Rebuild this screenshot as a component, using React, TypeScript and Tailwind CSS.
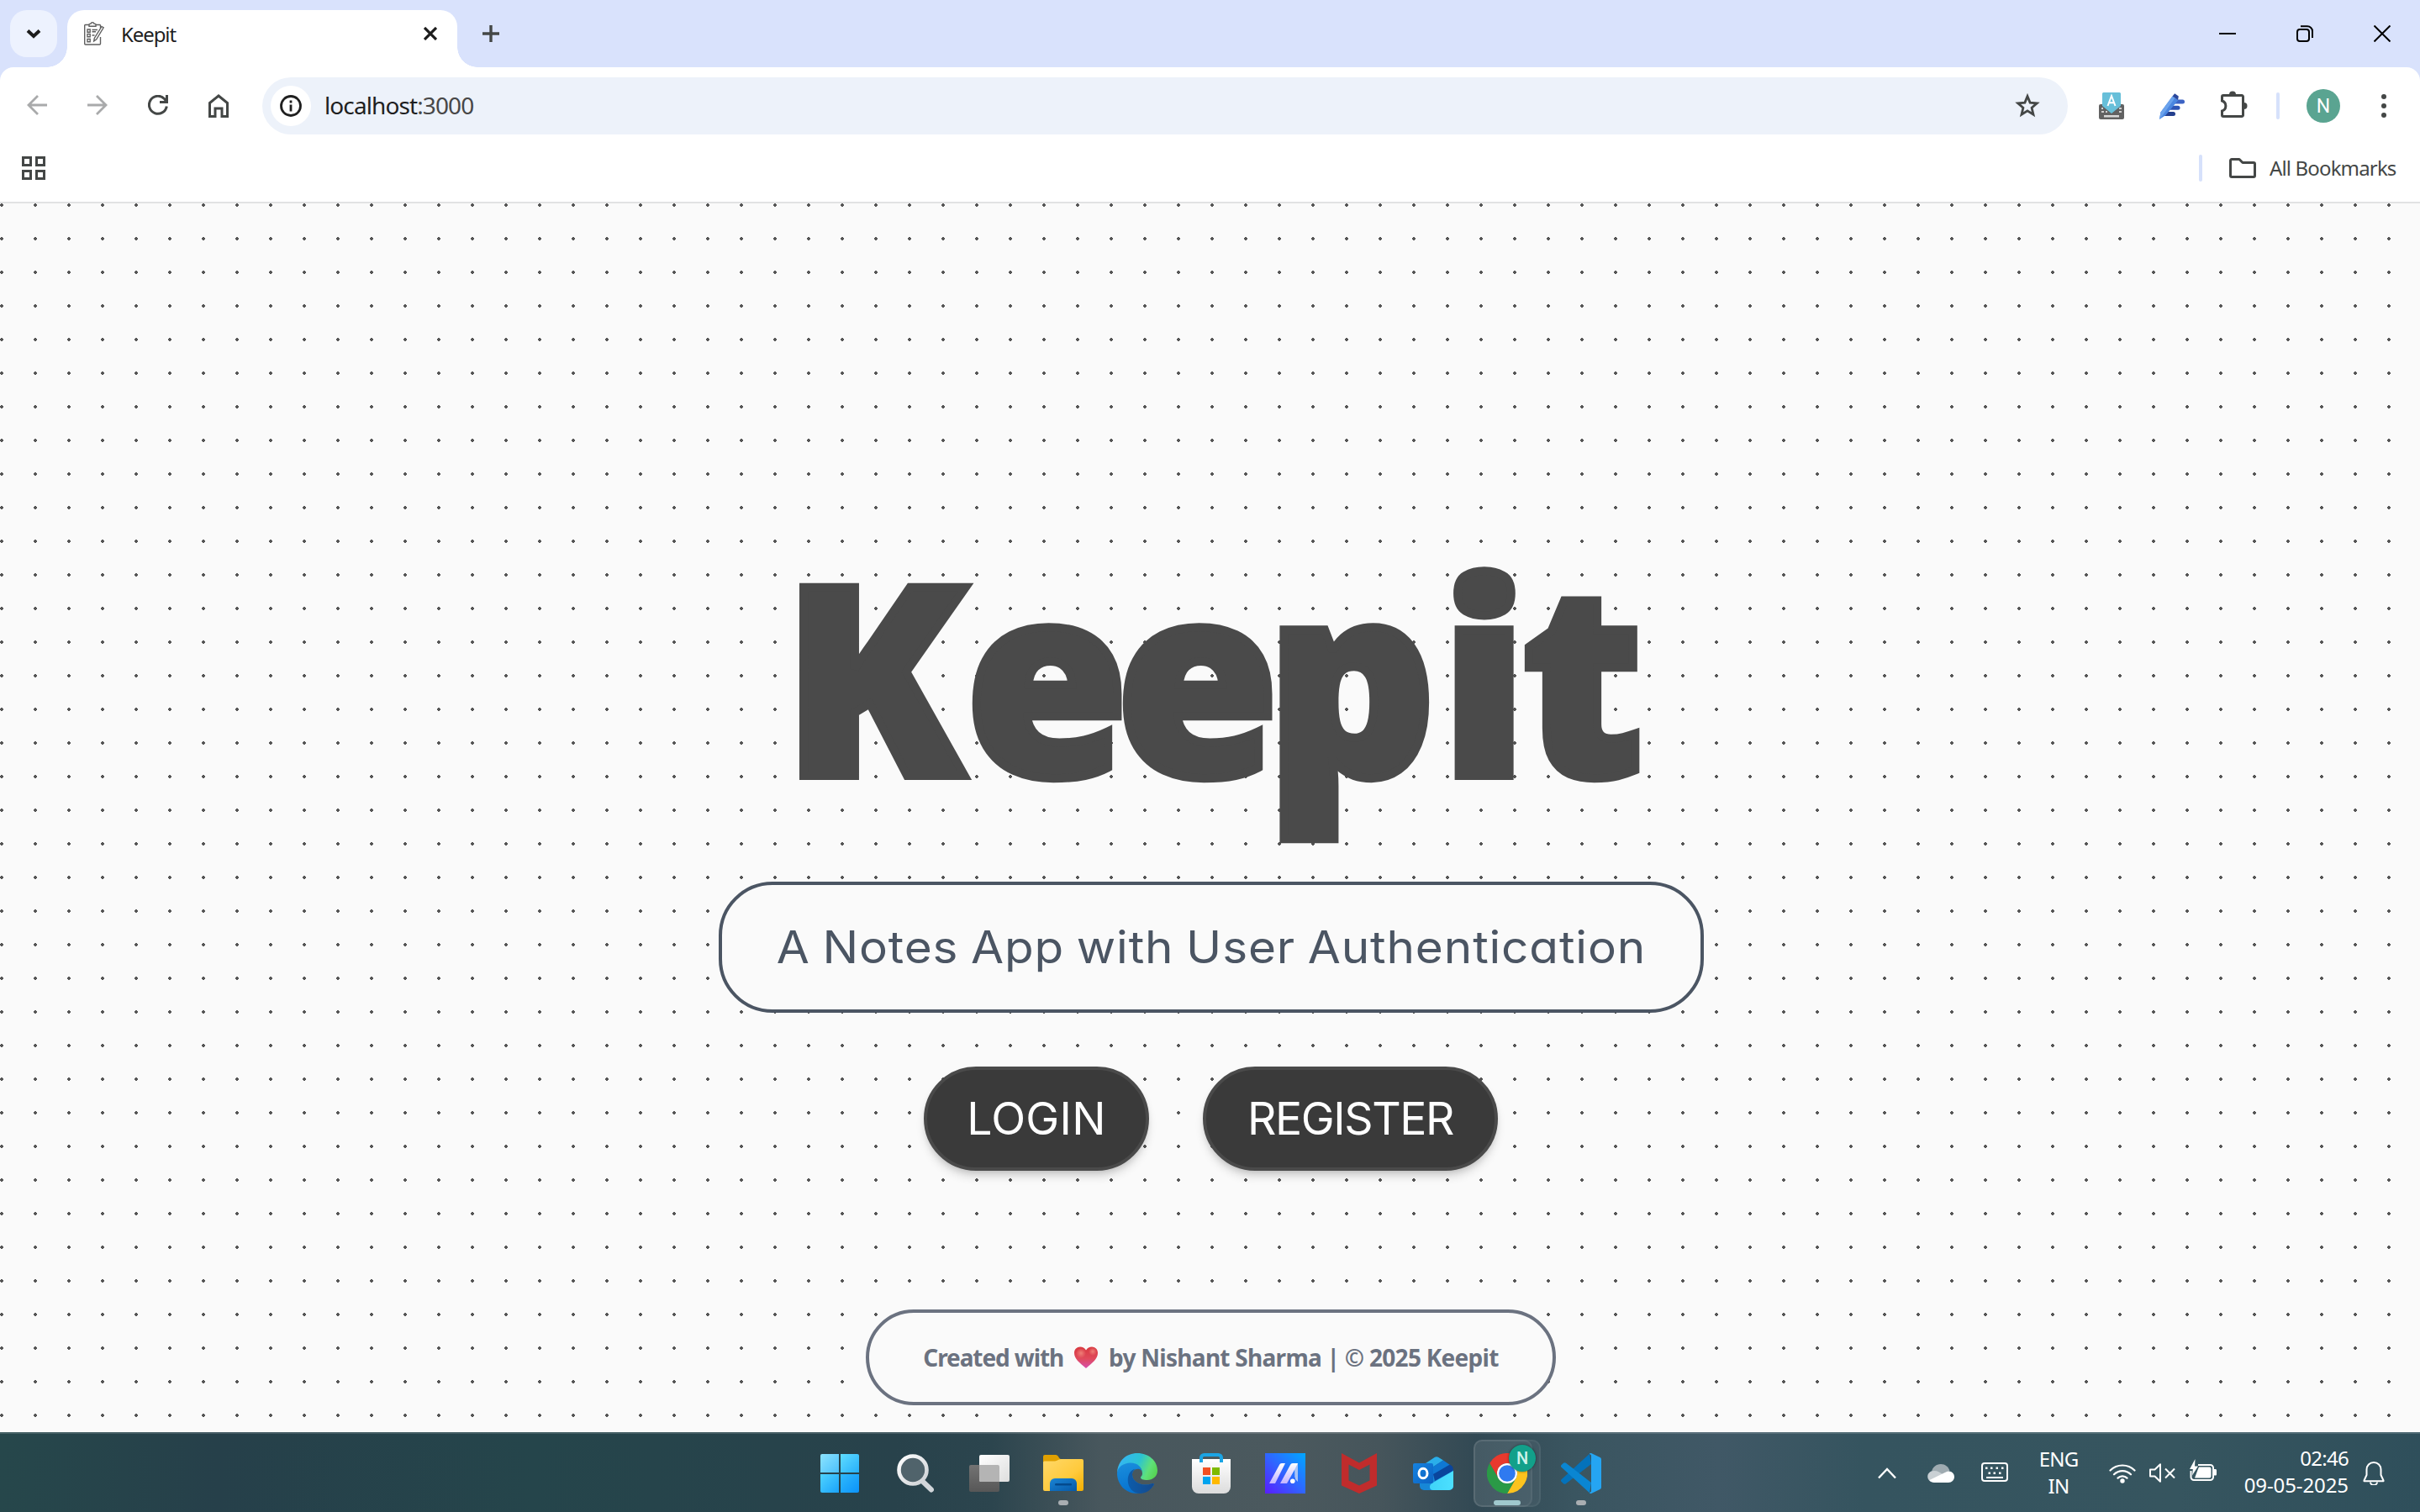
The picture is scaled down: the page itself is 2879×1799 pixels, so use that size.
import React from "react";

const ui = "font-['Noto_Sans','Open_Sans',sans-serif]";
const geo = "font-[Inter,sans-serif] [font-feature-settings:'cv11']";

/* ---------- browser chrome ---------- */

function Favicon() {
  return (
    <svg width="24" height="28" viewBox="0 0 24 28" fill="none" stroke="#5f5f5f" strokeWidth="1.4">
      <path d="M6 3.5H1.5a.8.8 0 0 0-.8.8v21.8c0 .6.3.9.9.9h17c.6 0 .9-.3.9-.9V18M14 3.5h4.500a1 1 0 0 1 1 1V7" />
      <path d="M6 5.300V3.200c0-.5.300-.8.800-.8h1C8.300 1 9 .8 10 .8s1.700.2 2.200 1.600h1c.5 0 .8.300.8.800v2.100z" />
      <path d="M4 9h3.200v3.200H4zM4 14.500h3.200v3.200H4zM4 20.500h3.200v3.200H4zM9.500 9.500H16M9.500 11.800H14M9.500 16h3" />
      <path d="m21 5.500 2.200 1.300-8.500 14-3 2.200.6-3.600z" />
    </svg>
  );
}

function TabStrip() {
  return (
    <div className="flex h-20 items-start pl-3 pr-[35px]">
      <div className="mt-3 flex size-14 items-center justify-center rounded-[20px] bg-[#edf2fe]">
        <svg width="18" height="12" viewBox="0 0 18 12" fill="none" stroke="#1c1c1c" strokeWidth="4">
          <path d="m2 2.500 7 6.500 7-6.500" />
        </svg>
      </div>
      <div className="relative ml-3 mt-3 flex h-[68px] w-[464px] items-center rounded-t-[20px] bg-white pb-3 pl-5 pr-6">
        <div className="absolute -left-6 bottom-0 size-6 bg-[radial-gradient(circle_at_0_0,transparent_23.500px,white_24px)]" />
        <div className="absolute -right-6 bottom-0 size-6 bg-[radial-gradient(circle_at_100%_0,transparent_23.500px,white_24px)]" />
        <Favicon />
        <span className="ml-5 mt-px text-[24px] leading-8 tracking-[-1.1px] text-[#1f1f1f]">Keepit</span>
        <svg className="ml-auto" width="16" height="16" viewBox="0 0 16 16" stroke="#1c1c1c" strokeWidth="3.200">
          <path d="m1 1 14 14M15 1 1 15" />
        </svg>
      </div>
      <svg className="ml-[30px] mt-[30px]" width="20" height="20" viewBox="0 0 20 20" stroke="#444746" strokeWidth="3.400">
        <path d="M10 0v20M0 10h20" />
      </svg>
      <div className="ml-auto mt-[30px] flex gap-[72px]">
        <svg width="20" height="20" viewBox="0 0 20 20" stroke="#000" strokeWidth="2">
          <path d="M0 10h20" />
        </svg>
        <svg width="20" height="20" viewBox="0 0 20 20" fill="none" stroke="#000" strokeWidth="2">
          <rect x="1" y="5" width="14" height="14" rx="3" />
          <path d="M5 1.200h8a6 6 0 0 1 6 6V15" />
        </svg>
        <svg width="20" height="20" viewBox="0 0 20 20" stroke="#000" strokeWidth="2">
          <path d="m.5.500 19 19m0-19-19 19" />
        </svg>
      </div>
    </div>
  );
}

function KeyboardExt() {
  return (
    <svg width="30" height="32" viewBox="0 0 30 32">
      <rect y="14" width="30" height="18" rx="2" fill="#626262" />
      <path d="M3 18h2v2H3zM3 22h3v2H3zM24 18h3v2h-3zM24 22h3v2h-3zM8 22h2v2H8z" fill="#cfcfcf" />
      <path d="M6 27h18v2.500H6z" fill="#d8d8d8" />
      <path d="M4 1.500A1.500 1.500 0 0 1 5.500 0h19A1.500 1.500 0 0 1 26 1.500V16l-11 9L4 16z" fill="#67bfd9" />
      <path d="m10.500 16 4.500-12 4.500 12M12 12.200h6" fill="none" stroke="#fff" strokeWidth="2" />
    </svg>
  );
}

function PenExt() {
  return (
    <svg width="31" height="31" viewBox="0 0 31 31">
      <path d="M20 7.500h8.500a2.500 2.500 0 0 1 0 5H17z" fill="#3c63c4" />
      <path d="M16 14.700h7a2.500 2.500 0 0 1 0 5H12z" fill="#2f55b5" />
      <path d="M11 22h6.500a2.500 2.500 0 0 1 0 5H6z" fill="#243f8e" />
      <path d="m16.500 3.500 7 4.500L8.500 26 1 31l1.500-8.500z" fill="#4a86e0" />
      <path d="m16.500 3.500 3 1.900L4 27.500 1 31l1.500-8.500z" fill="#6aa2ec" />
      <path d="m19.200.300 4.600 3.200-.8 4.500-6.500-4.500z" fill="#2a479c" />
    </svg>
  );
}

function Toolbar() {
  return (
    <div className="flex h-[92px] items-center pl-8 pr-[38px]">
      <div className="flex w-60 shrink-0 justify-between">
        <svg width="24" height="24" viewBox="0 0 24 24" fill="none" stroke="#a9aaab" strokeWidth="2.800">
          <path d="M24 12H2M13 1 2 12l11 11" />
        </svg>
        <svg width="24" height="24" viewBox="0 0 24 24" fill="none" stroke="#a9aaab" strokeWidth="2.800">
          <path d="M0 12h22M11 1l11 11-11 11" />
        </svg>
        <svg width="24" height="24" viewBox="0 0 24 24" fill="none" stroke="#444746" strokeWidth="3">
          <path d="M22.300 13.500A10.500 10.500 0 1 1 19.500 4.500L22 8" />
          <path d="M22.500 0v8.500H14" />
        </svg>
        <svg className="-mt-px" width="24" height="28" viewBox="0 0 24 28" fill="none" stroke="#444746" strokeWidth="3">
          <path d="M1.500 26.500V10.500L12 2l10.500 8.500v16h-6.500v-9.500H8v9.500z" />
        </svg>
      </div>
      <div className="ml-10 flex h-[68px] w-[2148px] shrink-0 items-center rounded-full bg-[#edf2fa] pl-2.5 pr-[33px]">
        <div className="flex size-12 items-center justify-center rounded-full bg-white">
          <svg width="26" height="26" viewBox="0 0 26 26" fill="none" stroke="#1f1f1f" strokeWidth="2.800">
            <circle cx="13" cy="13" r="11.500" />
            <path d="M13 11.500v8M13 6.500v3" />
          </svg>
        </div>
        <span className="-mt-0.5 ml-4 text-[28px] leading-9 tracking-[-0.9px] text-[#1f1f1f]">
          localhost<span className="text-[#474747]">:3000</span>
        </span>
        <svg className="-mt-px ml-auto" width="30" height="29" viewBox="0 0 30 29" fill="none" stroke="#444746" strokeWidth="2.800">
          <path d="m15 3.500 3.100 7.600 8.200.7-6.200 5.400 1.900 8-7-4.300-7 4.300 1.900-8-6.200-5.400 8.200-.7z" />
        </svg>
      </div>
      <div className="ml-[37px]">
        <KeyboardExt />
      </div>
      <div className="ml-[41px]">
        <PenExt />
      </div>
      <svg className="-mt-1 ml-[43px]" width="32" height="32" viewBox="0 0 32 32">
        <path
          d="M1.500 7a1.500 1.500 0 0 1 1.500-1.500h22A1.500 1.500 0 0 1 26.500 7v22a1.500 1.500 0 0 1-1.500 1.500H3A1.500 1.500 0 0 1 1.500 29v-5a6.300 6.300 0 0 0 0-12z"
          fill="none"
          stroke="#444746"
          strokeWidth="3"
        />
        <path d="M10 4.500a4 4 0 0 1 8 0zM27.500 14a4 4 0 0 1 0 8z" fill="#444746" />
      </svg>
      <div className="ml-[34px] h-8 w-1 rounded-full bg-[#d6e1fb]" />
      <div className="ml-8 flex size-10 items-center justify-center rounded-full bg-[#5aa491] font-[Roboto,sans-serif] text-[23px] leading-none text-white">
        N
      </div>
      <div className="ml-[49px] flex flex-col gap-[5px]">
        <i className="size-1.5 rounded-full bg-[#444746]" />
        <i className="size-1.5 rounded-full bg-[#444746]" />
        <i className="size-1.5 rounded-full bg-[#444746]" />
      </div>
    </div>
  );
}

function BookmarksBar() {
  return (
    <div className="flex h-[70px] items-center border-b-2 border-[#e1e2e3] pb-3 pl-[26px] pr-[28px]">
      <svg width="28" height="28" viewBox="0 0 28 28" fill="none" stroke="#444746" strokeWidth="3">
        <path d="M1.500 1.500h9v9h-9zM17.500 1.500h9v9h-9zM1.500 17.500h9v9h-9zM17.500 17.500h9v9h-9z" />
      </svg>
      <div className="ml-auto h-8 w-1 rounded-full bg-[#d6e1fb]" />
      <svg className="ml-8" width="32" height="24" viewBox="0 0 32 24" fill="none" stroke="#444746" strokeWidth="3" strokeLinejoin="round">
        <path d="M1.500 3A1.500 1.500 0 0 1 3 1.500h9l4 4h13A1.500 1.500 0 0 1 30.500 7v14a1.500 1.500 0 0 1-1.500 1.500H3A1.500 1.500 0 0 1 1.500 21z" />
      </svg>
      <span className="-mt-px ml-4 w-[151px] whitespace-nowrap text-[24px] leading-8 tracking-[-0.85px] text-[#444746]">All Bookmarks</span>
    </div>
  );
}

/* ---------- page ---------- */

function Heart() {
  return (
    <svg width="28" height="26" viewBox="0 0 28 26">
      <defs>
        <linearGradient id="heart" x1="0" y1="0" x2="0" y2="1">
          <stop offset="0" stopColor="#d8383f" />
          <stop offset=".55" stopColor="#e04a5c" />
          <stop offset="1" stopColor="#d64fae" />
        </linearGradient>
        <radialGradient id="shine">
          <stop offset="0" stopColor="#ef8078" />
          <stop offset="1" stopColor="#ef8078" stopOpacity="0" />
        </radialGradient>
      </defs>
      <path d="M14 26C6 19.500 0 14.500 0 7.800 0 3.400 3.200.500 7 .500c3 0 5.500 1.500 7 4 1.500-2.500 4-4 7-4 3.800 0 7 2.900 7 7.300C28 14.500 22 19.500 14 26z" fill="url(#heart)" />
      <circle cx="8" cy="8" r="6" fill="url(#shine)" />
      <circle cx="22" cy="6" r="5" fill="url(#shine)" />
    </svg>
  );
}

function PillButton({ label, className }: { label: string; className: string }) {
  return (
    <button
      className={`flex h-[124px] items-center justify-center rounded-full border-4 border-[#4a4a4a] bg-[#3a3a3a] text-[53.500px] leading-none text-white shadow-[0_8px_12px_-2px_rgba(0,0,0,0.16),0_4px_8px_-4px_rgba(0,0,0,0.16)] ${geo} ${className}`}
    >
      {label}
    </button>
  );
}

function Landing() {
  return (
    <main className="flex h-[1462px] flex-col items-center bg-[#fafafa] bg-[radial-gradient(circle_at_2px_2px,#555_2px,transparent_2px)] bg-[size:40px_40px] pl-0.5 pt-[402px]">
      <h1 className="whitespace-nowrap text-[314px] font-black leading-none text-[#4a4a4a] [-webkit-text-stroke:10px_#4a4a4a]">
        <span className="tracking-[1px]">K</span>
        <span className="tracking-[-15px]">ee</span>
        <span className="tracking-[6px]">p</span>
        <span className="tracking-[-6px]">it</span>
      </h1>
      <div className="mt-[91px] flex h-[156px] w-[1172px] items-center justify-center rounded-[64px] border-4 border-[#4b5563] bg-[#fafafa]">
        <p className={`origin-center scale-x-[1.060] whitespace-nowrap text-[53.500px] leading-none tracking-[0.8px] text-[#4b5563] [word-spacing:-2px] ${geo}`}>
          A Notes App with User Authentication
        </p>
      </div>
      <div className="mt-16 flex gap-16">
        <PillButton label="LOGIN" className="w-[268px] tracking-[0.300px]" />
        <PillButton label="REGISTER" className="w-[351px] tracking-[-1.400px]" />
      </div>
      <footer className="mt-[165px] flex h-[114px] w-[821px] items-center justify-center gap-[13px] rounded-full border-4 border-[#6b7280] bg-[#fafafa] text-[28px] font-bold leading-none text-[#6b7280]">
        <span className="tracking-[-1.100px]">Created with</span>
        <Heart />
        <span className="tracking-[-0.720px]">by Nishant Sharma | © 2025 Keepit</span>
      </footer>
    </main>
  );
}

/* ---------- taskbar ---------- */

function StartIcon() {
  return (
    <svg className="-ml-1" width="46" height="46" viewBox="0 0 46 46">
      <defs>
        <linearGradient id="w1" x1="0" y1="0" x2="1" y2="1"><stop stopColor="#8ce4ff" /><stop offset="1" stopColor="#4cc0fb" /></linearGradient>
        <linearGradient id="w2" x1="0" y1="0" x2="1" y2="1"><stop stopColor="#5fdcff" /><stop offset="1" stopColor="#27b0fb" /></linearGradient>
        <linearGradient id="w3" x1="0" y1="0" x2="1" y2="1"><stop stopColor="#4fd3ff" /><stop offset="1" stopColor="#1aa3fa" /></linearGradient>
        <linearGradient id="w4" x1="0" y1="0" x2="1" y2="1"><stop stopColor="#2fb9fc" /><stop offset="1" stopColor="#0b93fb" /></linearGradient>
      </defs>
      <path d="M2 0h20v22H0V2a2 2 0 0 1 2-2z" fill="url(#w1)" />
      <path d="M24 0h20a2 2 0 0 1 2 2v20H24z" fill="url(#w2)" />
      <path d="M0 24h22v22H2a2 2 0 0 1-2-2z" fill="url(#w3)" />
      <path d="M24 24h22v20a2 2 0 0 1-2 2H24z" fill="url(#w4)" />
    </svg>
  );
}

function SearchIcon() {
  return (
    <svg width="44" height="46" viewBox="0 0 44 46">
      <defs>
        <linearGradient id="sg" x1="0" y1="0" x2="1" y2="1"><stop stopColor="#fff" /><stop offset="1" stopColor="#ccd0d4" /></linearGradient>
      </defs>
      <path d="m30 32 11 10.500" stroke="#d2d6da" strokeWidth="6" strokeLinecap="round" />
      <circle cx="19" cy="19" r="16.500" fill="#50636b" stroke="url(#sg)" strokeWidth="4.600" />
    </svg>
  );
}

function TaskViewIcon() {
  return (
    <svg width="48" height="44" viewBox="0 0 48 44">
      <defs>
        <linearGradient id="tv" x1="0" y1="0" x2="1" y2="1"><stop stopColor="#fff" /><stop offset="1" stopColor="#dedede" /></linearGradient>
        <linearGradient id="tv2" x1="0" y1="0" x2="0" y2="1"><stop stopColor="#737373" /><stop offset="1" stopColor="#575757" /></linearGradient>
      </defs>
      <rect y="12" width="36" height="32" rx="2" fill="url(#tv2)" />
      <rect x="12" width="36" height="32" rx="2" fill="url(#tv)" />
      <path d="M12 12h22a2 2 0 0 1 2 2v18H14a2 2 0 0 1-2-2z" fill="#b4b4b4" />
    </svg>
  );
}

function ExplorerIcon() {
  return (
    <svg width="48" height="43" viewBox="0 0 48 43">
      <defs>
        <linearGradient id="fy" x1="0" y1="0" x2="1" y2="1"><stop stopColor="#ffd869" /><stop offset=".6" stopColor="#ffca3c" /><stop offset="1" stopColor="#f2ae00" /></linearGradient>
        <linearGradient id="fb" x1="0" y1="0" x2="1" y2="1"><stop stopColor="#1a84d4" /><stop offset="1" stopColor="#0659a8" /></linearGradient>
      </defs>
      <path d="M0 2a2 2 0 0 1 2-2h13c3 0 4 5 6 5v6H0z" fill="#e0a000" />
      <path d="M0 9c0-1 1-1.500 2-1.500h12C17 7.500 18 5 21 5h25a2 2 0 0 1 2 2v34a2 2 0 0 1-2 2H2a2 2 0 0 1-2-2z" fill="url(#fy)" />
      <path d="M8 43V34a6 6 0 0 1 6-6h20a6 6 0 0 1 6 6v9z" fill="url(#fb)" />
      <rect x="14" y="34" width="20" height="2.400" rx="1.200" fill="#044a8d" />
    </svg>
  );
}

function EdgeIcon() {
  return (
    <svg width="48" height="48" viewBox="0 0 48 48">
      <defs>
        <linearGradient id="e1" x1="0" y1=".3" x2="1" y2=".6"><stop stopColor="#35b4f6" /><stop offset=".5" stopColor="#2cc3d2" /><stop offset=".8" stopColor="#5fe07a" /><stop offset="1" stopColor="#57d455" /></linearGradient>
        <linearGradient id="e2" x1="0" y1="0" x2=".3" y2="1"><stop stopColor="#1b8fdd" /><stop offset="1" stopColor="#0672cf" /></linearGradient>
        <linearGradient id="e3" x1="0" y1="0" x2="1" y2="0"><stop stopColor="#0d5cab" /><stop offset="1" stopColor="#154a8c" /></linearGradient>
      </defs>
      <path d="M0 24C0 16 7 10.500 16 10.500c9 0 14 6.500 14 13.500 0-3.500-2.500-5.300-5.500-5.300-4 0-6.500 3-6.500 6.800C18 33 26 38 35 37.600c3-.1 5-1 7-1.600 1.500-.4 2.300.5 1.500 2C39.500 44.500 32 48 24 48 10 48 0 37 0 24z" fill="url(#e2)" />
      <path d="M12.700 32c0-7 3.800-12.500 8.800-13.300-2.300 1.600-3.500 4-3.500 6.800C18 33 26 38 35 37.600c3-.1 5-1 7-1.600 1.500-.4 2.300.5 1.500 2C39.500 44.500 34 48 27 48c-8 0-14.300-7-14.300-16z" fill="url(#e3)" />
      <path d="M0 23C1 9 11 0 24 0c14 0 24 9.500 24 20.500C48 28 42 32 36 32c-5 0-8-1.300-8-3 0-1.300 2-1.500 2-5 0-7-5.500-12.500-14-12.500S1 16.500 0 23z" fill="url(#e1)" />
    </svg>
  );
}

function StoreIcon() {
  return (
    <svg width="48" height="48" viewBox="0 0 48 48">
      <defs>
        <linearGradient id="st" x1="0" y1="0" x2="0" y2="1"><stop stopColor="#fff" /><stop offset="1" stopColor="#dcdcdc" /></linearGradient>
      </defs>
      <path d="M1 7h46v33a8 8 0 0 1-8 8H9a8 8 0 0 1-8-8z" fill="url(#st)" />
      <path d="M12 11V5.500A3.500 3.500 0 0 1 15.500 2h17A3.500 3.500 0 0 1 36 5.500V11" fill="none" stroke="#1ba4e4" strokeWidth="4" />
      <path d="M14 17h9v9h-9z" fill="#f25022" />
      <path d="M25 17h9v9h-9z" fill="#7fba00" />
      <path d="M14 28h9v9h-9z" fill="#00a4ef" />
      <path d="M25 28h9v9h-9z" fill="#ffb900" />
    </svg>
  );
}

function AsusIcon() {
  return (
    <svg width="48" height="48" viewBox="0 0 48 48">
      <defs>
        <linearGradient id="as" x1="0" y1="1" x2="1" y2="0"><stop stopColor="#5a1cff" /><stop offset=".5" stopColor="#2f66ff" /><stop offset="1" stopColor="#00a8ff" /></linearGradient>
        <linearGradient id="am" x1="0" y1="1" x2="0" y2="0"><stop stopColor="#c3b4ff" /><stop offset="1" stopColor="#fff" /></linearGradient>
      </defs>
      <path d="M0 0h48v48H0z" fill="url(#as)" />
      <path d="m5 36 12-22c.6-1.300 1.500-2 3-2h4L12 36z" fill="url(#am)" />
      <path d="m18 36 12-22c.6-1.300 1.500-2 3-2h6v17h-3.500V19L26 36z" fill="url(#am)" />
      <path d="M35.500 19 39 12v22l-3-3z" fill="#a9c4f5" />
      <circle cx="32.800" cy="33.300" r="2.800" fill="#fff" />
    </svg>
  );
}

function McAfeeIcon() {
  return (
    <svg width="42" height="48" viewBox="0 0 42 48">
      <path d="m0 0 21 11.500L42 0v38.500L21 48 0 38.500zM8.500 13.500v19L21 38.500l12.500-6v-19L21 20z" fill="#c02c2c" fillRule="evenodd" />
    </svg>
  );
}

function OutlookIcon() {
  return (
    <svg width="48" height="40" viewBox="0 0 48 40">
      <defs>
        <linearGradient id="ol" x1="0" y1="0" x2="1" y2="0"><stop stopColor="#3fd4f8" /><stop offset="1" stopColor="#4ce0ff" /></linearGradient>
        <linearGradient id="ob" x1="0" y1="0" x2="1" y2="1"><stop stopColor="#1583e0" /><stop offset="1" stopColor="#0c62c2" /></linearGradient>
      </defs>
      <path d="M8 18 46 14c1 .700 2 2 2 4v17a5 5 0 0 1-5 5H13a5 5 0 0 1-5-5z" fill="#1787d6" />
      <path d="M12 10 26 .800c1-.700 3-.700 4 0L36 4.500 20 15h-8z" fill="#2aaeea" />
      <path d="M36 4.500 44 10 24 22V12z" fill="#0f78d4" />
      <path d="m44 9.500 2.500 2c1 1 1.500 3 1.200 5.500L26 29l-2-8z" fill="#0a459c" />
      <path d="M48 17v18a5 5 0 0 1-5 5H24a4 4 0 0 1-4-4c0-2 1-3 3-4.500z" fill="url(#ol)" />
      <rect y="8" width="24" height="24" rx="2" fill="url(#ob)" />
      <ellipse cx="12" cy="20" rx="5" ry="5.800" fill="none" stroke="#fff" strokeWidth="3" />
    </svg>
  );
}

function ChromeIcon() {
  return (
    <svg width="48" height="48" viewBox="0 0 48 48">
      <path d="M3.200 12a24 24 0 0 1 41.600 0H24a12 12 0 0 0-10.400 18z" fill="#e8392d" />
      <path d="M44.800 12A24 24 0 0 1 24 48l10.400-18A12 12 0 0 0 24 12z" fill="#fcc31e" />
      <path d="M3.200 12A24 24 0 0 0 24 48l10.400-18a12 12 0 0 1-20.800 0z" fill="#2a9a47" />
      <circle cx="24" cy="24" r="12" fill="#fff" />
      <circle cx="24" cy="24" r="9.800" fill="#2f7af0" />
    </svg>
  );
}

function CodeIcon() {
  return (
    <svg width="48" height="48" viewBox="0 0 48 48">
      <path d="M34 .700 36 13 6 36.200c-1 .8-2 .8-3 0l-2.400-2.200c-.9-.9-.9-2 0-2.800z" fill="#0472bb" />
      <path d="M34 47.300 36 35 6 11.800c-1-.8-2-.8-3 0L.600 14c-.9.900-.9 2 0 2.800z" fill="#0a86d2" />
      <path d="M36 0l10.500 5c1 .5 1.500 1.300 1.500 2.400v33.200c0 1.100-.5 1.900-1.500 2.400L36 48c-1 .3-1.600 0-2-.700l2-1.800v-43L34 .700C34.400 0 35 -.3 36 0z" fill="#25a5f2" />
    </svg>
  );
}

const apps: { key: string; icon: React.ReactNode; running?: boolean }[] = [
  { key: "start", icon: <StartIcon /> },
  { key: "search", icon: <SearchIcon /> },
  { key: "views", icon: <TaskViewIcon /> },
  { key: "files", icon: <ExplorerIcon />, running: true },
  { key: "edge", icon: <EdgeIcon /> },
  { key: "store", icon: <StoreIcon /> },
  { key: "asus", icon: <AsusIcon /> },
  { key: "mcafee", icon: <McAfeeIcon /> },
  { key: "outlook", icon: <OutlookIcon /> },
];

function AppCell({ children, running }: { children: React.ReactNode; running?: boolean }) {
  return (
    <div className="relative flex h-20 w-[88px] items-center justify-center">
      {children}
      {running && <i className="absolute bottom-0.5 left-[38px] h-1.5 w-3 rounded-full bg-[#a9aeb2]" />}
    </div>
  );
}

function Tray() {
  return (
    <div className="ml-[309px] flex items-center text-[24px] leading-8 text-white">
      <svg width="22" height="14" viewBox="0 0 22 14" fill="none" stroke="#fff" strokeWidth="2.400">
        <path d="M1 12.500 11 2l10 10.500" />
      </svg>
      <svg className="ml-[37px]" width="32" height="22" viewBox="0 0 32 22">
        <path d="M5 9C6 4 10 0 16 0c5 0 9 3 10.500 8L16 14z" fill="#9fabb1" />
        <path d="M8 8c4 0 8 2 11 5L4 21c-6-3-5-13 4-13z" fill="#c9d0d4" />
        <path d="M2.500 19 22 9.500c5-3 10 1 10 5.500 0 4-3 7-7 7H8c-2.500 0-4.500-1.300-5.500-3z" fill="#fff" />
      </svg>
      <svg className="-mt-0.5 ml-8" width="32" height="23" viewBox="0 0 32 23">
        <rect x="1" y="1" width="30" height="21" rx="3" fill="none" stroke="#fff" strokeWidth="2" />
        <path d="M5 5.500h2.500V8H5zM11 5.500h2.500V8H11zM17.500 5.500H20V8h-2.500zM24 5.500h2.500V8H24zM8.500 11.500H11V14H8.500zM14.500 11.500H17V14h-2.500zM21 11.500h2.500V14H21zM6 17h20v2H6z" fill="#fff" />
      </svg>
      <div className="-mt-0.5 ml-[34px] w-[52px] text-center tracking-[-0.800px]">
        ENG
        <br />
        IN
      </div>
      <svg className="ml-[34px]" width="32" height="24" viewBox="0 0 32 24" fill="none" stroke="#fff" strokeWidth="2.200" strokeLinecap="round">
        <path d="M1.500 8.500a20.500 20.500 0 0 1 29 0M6 13.300a14 14 0 0 1 20 0M10.500 17.600a7.800 7.800 0 0 1 11 0" />
        <circle cx="16" cy="21" r="1.600" fill="#fff" />
      </svg>
      <svg className="ml-4" width="32" height="23" viewBox="0 0 32 23" fill="none" stroke="#fff" strokeWidth="2">
        <path d="M1 7.500h5.500L13 1.200v20.600L6.500 15.500H1z" strokeLinejoin="round" />
        <path d="m19 6.500 11 11m0-11-11 11" />
      </svg>
      <svg className="-mt-1.5 ml-4" width="32" height="27" viewBox="0 0 32 27">
        <path d="M10 7h14.500A3.500 3.500 0 0 1 28 10.500v11a3.500 3.500 0 0 1-3.500 3.500H5a3.500 3.500 0 0 1-3.500-3.500V14" fill="none" stroke="#fff" strokeWidth="2" />
        <path d="M11 9.500h12.500A2 2 0 0 1 25.500 11.500v9a2 2 0 0 1-2 2H6L9.500 13zM29 12h1.500c1 0 1.500.700 1.500 1.500V18c0 1-.5 1.500-1.500 1.500H29z" fill="#fff" />
        <path d="M6.500 0 0 12h3.800L3 19.500 10 8.500H6z" fill="#fff" />
      </svg>
      <div className="-mt-[3px] w-[157px] text-right">
        <span className="tracking-[-0.700px]">02:46</span>
        <br />
        <span className="tracking-[-0.100px]">09-05-2025</span>
      </div>
      <svg className="ml-[17px]" width="26" height="28" viewBox="0 0 26 28" fill="none" stroke="#fff" strokeWidth="2">
        <path d="M13 1c5 0 8.500 3.800 8.500 8.500V16l3 6.500v.8h-23v-.8l3-6.500V9.500C4.500 4.800 8 1 13 1z" strokeLinejoin="round" />
        <path d="M9 24.500a4 3.500 0 0 0 8 0" />
      </svg>
    </div>
  );
}

function Taskbar() {
  return (
    <div className="flex h-[95px] items-center border-t-2 border-white/15 bg-[linear-gradient(90deg,#26474b_0%,#26404a_9%,#25454b_22%,#28424b_37%,#2c454e_41%,#48575d_45.500%,#4b595e_53%,#46555b_57%,#324954_61%,#3a5560_65%,#405866_71%,#35545f_77%,#36555f_90%,#2f4f5b_100%)] bg-origin-border pl-[957px]">
      {apps.map((app) => (
        <AppCell key={app.key} running={app.running}>
          {app.icon}
        </AppCell>
      ))}
      <div className="relative flex h-20 w-[88px] items-center justify-center">
        <div className="absolute left-1 top-0 h-20 w-[80px] rounded-[10px] border-2 border-white/5 bg-white/5" />
        <div className="absolute left-1 top-0 h-20 w-[70px] rounded-[10px] border-2 border-white/5 bg-white/5" />
        <div className="relative">
          <ChromeIcon />
          <div className="absolute -top-[10px] left-[26px] flex size-8 items-center justify-center rounded-full bg-[#12a08a] font-[Roboto,sans-serif] text-[20px] font-medium leading-none text-[#cdf3ea] shadow-[0_0_3px_rgba(0,0,0,0.5)]">
            N
          </div>
        </div>
        <i className="absolute bottom-0.5 left-7 h-1.5 w-8 rounded-full bg-[#9fc8cd]" />
      </div>
      <AppCell running>
        <CodeIcon />
      </AppCell>
      <Tray />
    </div>
  );
}

export default function App() {
  return (
    <div className={`flex h-[1799px] w-[2879px] flex-col overflow-hidden bg-[#d9e2fc] ${ui}`}>
      <TabStrip />
      <div className="rounded-t-[16px] bg-white">
        <Toolbar />
        <BookmarksBar />
      </div>
      <Landing />
      <Taskbar />
    </div>
  );
}
